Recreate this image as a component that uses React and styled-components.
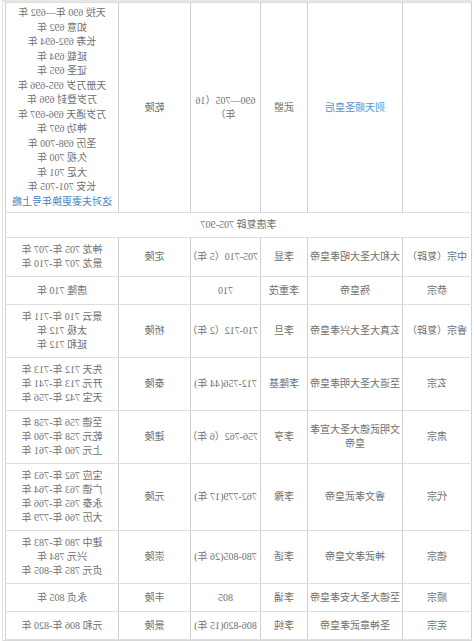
import React from 'react';
import styled, { createGlobalStyle } from 'styled-components';

const GlobalStyle = createGlobalStyle`
  html, body {
    margin: 0;
    padding: 0;
    background: #fff;
  }
  body {
    width: 474px;
    height: 641px;
    overflow: hidden;
  }
`;

// the screenshot is a mirror image of the page, so the whole sheet is flipped
const Sheet = styled.div`
  width: 466px;
  margin-left: 2px;
  padding-right: 3px;
  border-top: 2px solid #e6e6e6;
  border-right: 1px solid #e2e2e2;
  border-bottom: 3px solid #d8d8d8;
  transform: scaleX(-1);
`;

const Table = styled.table`
  width: 466px;
  border-collapse: collapse;
  table-layout: fixed;
  font-family: 'Liberation Serif', 'Noto Sans CJK SC', serif;
  font-size: 10px;
  color: #707070;
`;

const Cell = styled.td`
  padding: ${p => (p.$tight ? '3px 2px' : '5px 2px')};
  height: 17px;
  line-height: ${p => (p.$tight ? '14.5px' : '14px')};
  text-align: center;
  vertical-align: middle;
  border-top: 1px solid #dedede;
  border-bottom: 1px solid #dedede;
  border-left: 1px solid #cfcfcf;
  border-right: 1px solid #cfcfcf;
  white-space: ${p => (p.$nowrap ? 'nowrap' : 'normal')};
  color: ${p => (p.$link ? '#5793c9' : '#707070')};
`;

const SectionCell = styled.td`
  padding: 5px 2px;
  line-height: 14px;
  text-align: center;
  border: 1px solid #dedede;
  border-left-color: #cfcfcf;
  border-right-color: #cfcfcf;
`;

const Line = styled.div`
  color: ${p => (p.$link ? '#4683c0' : 'inherit')};
`;

function Lines({ items }) {
  return items.map((t, i) =>
    typeof t === 'string' ? <Line key={i}>{t}</Line> : <Line key={i} $link>{t.link}</Line>
  );
}

const rows = [
  {
    temple: '中宗（复辟）',
    title: '大和大圣大昭孝皇帝',
    name: '李显',
    reign: '705-710（5 年）',
    tomb: '定陵',
    eras: ['神龙 705 年-707 年', '景龙 707 年-710 年'],
  },
  {
    temple: '恭宗',
    title: '殇皇帝',
    name: '李重茂',
    reign: '710',
    tomb: '',
    eras: ['唐隆 710 年'],
  },
  {
    temple: '睿宗（复辟）',
    title: '玄真大圣大兴孝皇帝',
    name: '李旦',
    reign: '710-712（2 年）',
    tomb: '桥陵',
    eras: ['景云 710 年-711 年', '太极 712 年', '延和 712 年'],
  },
  {
    temple: '玄宗',
    title: '至道大圣大明孝皇帝',
    name: '李隆基',
    reign: '712-756(44 年)',
    tomb: '泰陵',
    eras: ['先天 712 年-713 年', '开元 713 年-741 年', '天宝 742 年-756 年'],
  },
  {
    temple: '肃宗',
    title: '文明武德大圣大宣孝皇帝',
    name: '李亨',
    reign: '756-762（6 年）',
    tomb: '建陵',
    eras: ['至德 756 年-758 年', '乾元 758 年-760 年', '上元  760 年-761 年'],
  },
  {
    temple: '代宗',
    title: '睿文孝武皇帝',
    name: '李豫',
    reign: '762-779(17 年)',
    tomb: '元陵',
    eras: ['宝应 762 年-763 年', '广德 763 年-764 年', '永泰 765 年-766 年', '大历 766 年-779 年'],
  },
  {
    temple: '德宗',
    title: '神武孝文皇帝',
    name: '李适',
    reign: '780-805(26 年)',
    tomb: '崇陵',
    eras: ['建中 780 年-783 年', '兴元 784 年', '贞元 785 年-805 年'],
  },
  {
    temple: '顺宗',
    title: '至德大圣大安孝皇帝',
    name: '李诵',
    reign: '805',
    tomb: '丰陵',
    eras: ['永贞 805 年'],
  },
  {
    temple: '宪宗',
    title: '圣神章武孝皇帝',
    name: '李纯',
    reign: '806-820(15 年)',
    tomb: '景陵',
    eras: ['元和 806 年-820 年'],
  },
];

const wuEras = [
  '天授 690 年—692 年',
  '如意 692 年',
  '长寿 692-694 年',
  '延载 694 年',
  '证圣 695 年',
  '天册万岁 695-696 年',
  '万岁登封 696 年',
  '万岁通天 696-697 年',
  '神功 697 年',
  '圣历 698-700 年',
  '久视 700 年',
  '大足 701 年',
  '长安 701-705 年',
  { link: '这对夫妻更换年号上瘾' },
];

export default function App() {
  return (
    <>
      <GlobalStyle />
      <Sheet>
        <Table>
          <colgroup>
            <col style={{ width: 69 }} />
            <col style={{ width: 95 }} />
            <col style={{ width: 47 }} />
            <col style={{ width: 70 }} />
            <col style={{ width: 72 }} />
            <col style={{ width: 113 }} />
          </colgroup>
          <tbody>
            <tr>
              <Cell />
              <Cell $link>则天顺圣皇后</Cell>
              <Cell>武曌</Cell>
              <Cell>690—705（16年）</Cell>
              <Cell>乾陵</Cell>
              <Cell $tight>
                <Lines items={wuEras} />
              </Cell>
            </tr>
            <tr>
              <SectionCell colSpan={6}>李唐复辟 705-907</SectionCell>
            </tr>
            {rows.map(r => (
              <tr key={r.name}>
                <Cell $nowrap>{r.temple}</Cell>
                <Cell>{r.title}</Cell>
                <Cell $nowrap>{r.name}</Cell>
                <Cell $nowrap>{r.reign}</Cell>
                <Cell>{r.tomb}</Cell>
                <Cell $nowrap>
                  <Lines items={r.eras} />
                </Cell>
              </tr>
            ))}
          </tbody>
        </Table>
      </Sheet>
    </>
  );
}
